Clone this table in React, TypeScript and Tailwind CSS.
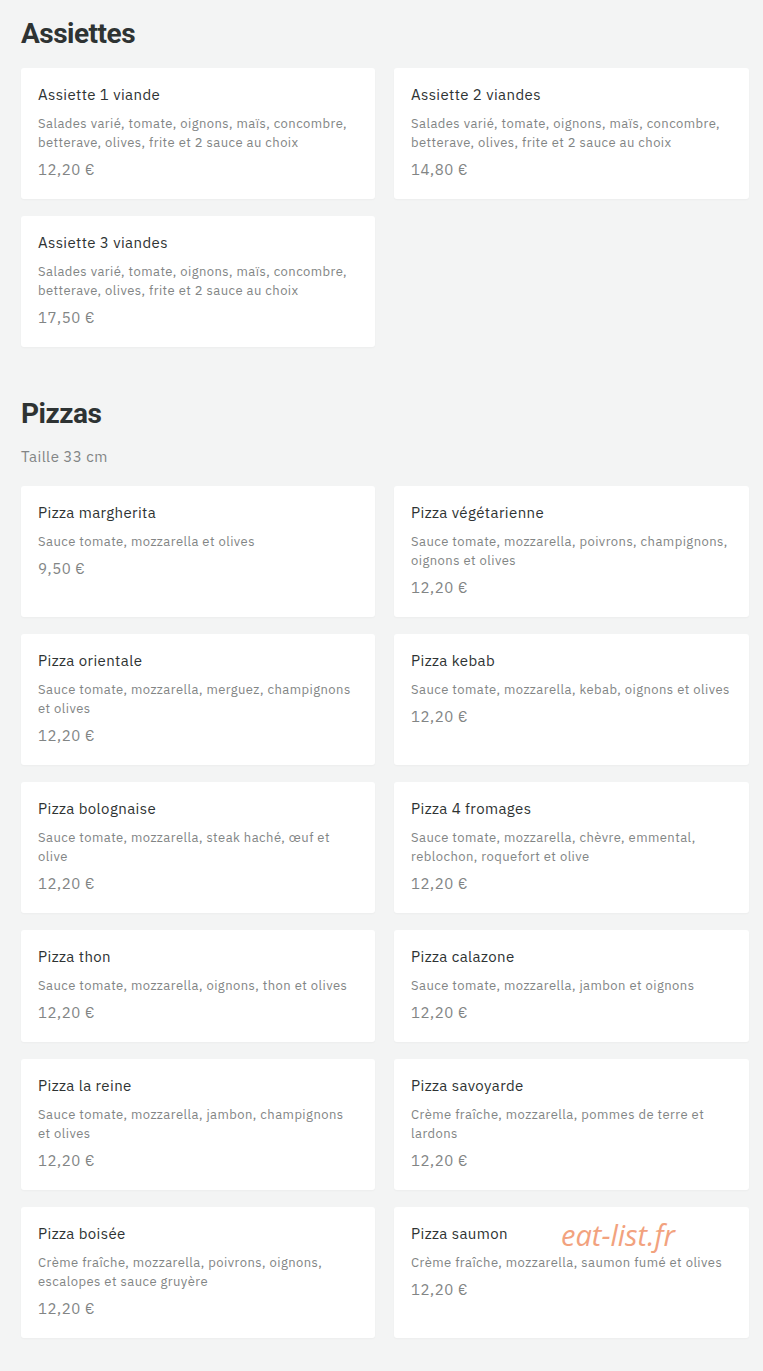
import React from "react";

type Item = { name: string; desc: string; price: string };

const assiettes: Item[] = [
  { name: "Assiette 1 viande", desc: "Salades varié, tomate, oignons, maïs, concombre, betterave, olives, frite et 2 sauce au choix", price: "12,20 €" },
  { name: "Assiette 2 viandes", desc: "Salades varié, tomate, oignons, maïs, concombre, betterave, olives, frite et 2 sauce au choix", price: "14,80 €" },
  { name: "Assiette 3 viandes", desc: "Salades varié, tomate, oignons, maïs, concombre, betterave, olives, frite et 2 sauce au choix", price: "17,50 €" },
];

const pizzas: Item[] = [
  { name: "Pizza margherita", desc: "Sauce tomate, mozzarella et olives", price: "9,50 €" },
  { name: "Pizza végétarienne", desc: "Sauce tomate, mozzarella, poivrons, champignons, oignons et olives", price: "12,20 €" },
  { name: "Pizza orientale", desc: "Sauce tomate, mozzarella, merguez, champignons et olives", price: "12,20 €" },
  { name: "Pizza kebab", desc: "Sauce tomate, mozzarella, kebab, oignons et olives", price: "12,20 €" },
  { name: "Pizza bolognaise", desc: "Sauce tomate, mozzarella, steak haché, œuf et olive", price: "12,20 €" },
  { name: "Pizza 4 fromages", desc: "Sauce tomate, mozzarella, chèvre, emmental, reblochon, roquefort et olive", price: "12,20 €" },
  { name: "Pizza thon", desc: "Sauce tomate, mozzarella, oignons, thon et olives", price: "12,20 €" },
  { name: "Pizza calazone", desc: "Sauce tomate, mozzarella, jambon et oignons", price: "12,20 €" },
  { name: "Pizza la reine", desc: "Sauce tomate, mozzarella, jambon, champignons et olives", price: "12,20 €" },
  { name: "Pizza savoyarde", desc: "Crème fraîche, mozzarella, pommes de terre et lardons", price: "12,20 €" },
  { name: "Pizza boisée", desc: "Crème fraîche, mozzarella, poivrons, oignons, escalopes et sauce gruyère", price: "12,20 €" },
  { name: "Pizza saumon", desc: "Crème fraîche, mozzarella, saumon fumé et olives", price: "12,20 €" },
];

function Card({ item, watermark }: { item: Item; watermark?: boolean }) {
  return (
    <div className="relative bg-white rounded-[3px] px-[17px] pt-[16px] pb-[18px] shadow-[0_1px_2px_rgba(0,0,0,0.03)]">
      <div className="text-[15px] leading-[22px] tracking-[0.4px] text-[#2e3333]">{item.name}</div>
      <div className="mt-[8px] text-[13px] leading-[19px] tracking-[0.45px] text-[#828585]">{item.desc}</div>
      <div className="mt-[7px] text-[15px] leading-[22px] tracking-[0.55px] text-[#828585]">{item.price}</div>
      {watermark && (
        <div
          className="absolute left-[167px] top-[8px] text-[29px] leading-[40px] italic text-[#f2a27e] pointer-events-none"
          style={{ fontFamily: '"Open Sans", sans-serif' }}
        >
          eat-list.fr
        </div>
      )}
    </div>
  );
}

export default function App() {
  return (
    <div
      className="min-h-[1371px] bg-[#f3f4f4] pl-[21px] pr-[14px] pt-[16px] pb-[32px]"
      style={{ fontFamily: '"IBM Plex Sans", "Noto Sans", sans-serif' }}
    >
      <h2
        className="text-[28px] leading-[36px] font-bold text-[#2e3333] tracking-[-0.5px]"
        style={{ fontFamily: 'Roboto, "Noto Sans", sans-serif' }}
      >
        Assiettes
      </h2>
      <div className="mt-[16px] grid grid-cols-[354px_355px] gap-x-[19px] gap-y-[17px]">
        {assiettes.map((it) => (
          <Card key={it.name} item={it} />
        ))}
      </div>

      <h2
        className="mt-[49px] text-[28px] leading-[36px] font-bold text-[#2e3333] tracking-[-0.5px]"
        style={{ fontFamily: 'Roboto, "Noto Sans", sans-serif' }}
      >
        Pizzas
      </h2>
      <div className="mt-[14px] text-[15px] leading-[22px] tracking-[0.45px] text-[#828585]">Taille 33 cm</div>
      <div className="mt-[18px] grid grid-cols-[354px_355px] gap-x-[19px] gap-y-[17px]">
        {pizzas.map((it, i) => (
          <Card key={it.name} item={it} watermark={i === pizzas.length - 1} />
        ))}
      </div>
    </div>
  );
}
